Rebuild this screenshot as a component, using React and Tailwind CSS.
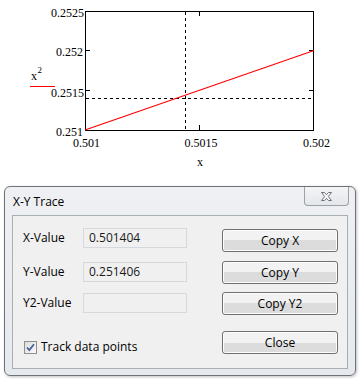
import React from "react";

const Plot = () => {
    const serif = { fontFamily: "'Liberation Serif', serif", fontSize: 12 };
    return (
        <svg width="364" height="182" viewBox="0 0 364 182" className="block">
            <g style={serif} fill="#000">
                <text x="84" y="17" textAnchor="end">0.2525</text>
                <text x="83" y="56" textAnchor="end">0.252</text>
                <text x="84" y="97" textAnchor="end">0.2515</text>
                <text x="83" y="136" textAnchor="end">0.251</text>
                <text x="86.5" y="147" textAnchor="middle">0.501</text>
                <text x="201" y="147" textAnchor="middle">0.5015</text>
                <text x="316.5" y="147" textAnchor="middle">0.502</text>
                <text x="200" y="166" textAnchor="middle">x</text>
                <text x="31" y="80">x</text>
                <text x="37.5" y="73" style={{ fontSize: 9 }}>2</text>
            </g>
            <line x1="30" y1="86.5" x2="55" y2="86.5" stroke="#ff0000" strokeWidth="1" />
            <rect x="85.5" y="11.5" width="228" height="119" fill="none" stroke="#000" strokeWidth="1" />
            {/* ticks */}
            <g stroke="#000" strokeWidth="1" shapeRendering="crispEdges">
                <line x1="199.5" y1="11" x2="199.5" y2="16" />
                <line x1="199.5" y1="125" x2="199.5" y2="130" />
                <line x1="85" y1="50.5" x2="90" y2="50.5" />
                <line x1="85" y1="90.5" x2="90" y2="90.5" />
                <line x1="309" y1="50.5" x2="314" y2="50.5" />
                <line x1="309" y1="90.5" x2="314" y2="90.5" />
            </g>
            {/* trace crosshair */}
            <g stroke="#000" strokeWidth="1" strokeDasharray="3 3" shapeRendering="crispEdges">
                <line x1="185.5" y1="12" x2="185.5" y2="130" />
                <line x1="86" y1="98.5" x2="313" y2="98.5" />
            </g>
            <line x1="85" y1="130" x2="314" y2="50.5" stroke="#ff0000" strokeWidth="1.2" />
        </svg>
    );
};

const Field = ({ value }) => (
    <div className="w-[104px] h-[20px] border border-[#d5d9de] bg-[#f0f0f0] flex items-center pl-[5px] text-[12px] text-[#1a1a1a]">
        {value}
    </div>
);

const WinButton = ({ children, className = "" }) => (
    <button
        className={
            "w-[116px] h-[23px] rounded-[3px] border border-[#707070] bg-gradient-to-b from-[#f2f2f2] from-50% to-[#dcdcdc] to-50% text-[12px] text-black flex items-center justify-center shadow-[inset_0_0_0_1px_#fcfcfc] " +
            className
        }
    >
        {children}
    </button>
);

export default function App() {
    return (
        <div className="w-[364px] h-[379px] bg-white overflow-hidden" style={{ fontFamily: "'Open Sans', 'Noto Sans', sans-serif" }}>
            <Plot />

            {/* X-Y Trace dialog */}
            <div className="ml-[4px] mt-[4px] w-[352px] h-[190px] rounded-[6px] border border-[#6e7378] bg-gradient-to-b from-[#eef0f3] to-[#e6e9ed] shadow-[1px_1px_3px_rgba(0,0,0,0.25)] flex flex-col">
                <div className="h-[28px] flex items-start justify-between">
                    <span className="ml-[8px] mt-[6px] text-[12px] text-black">X-Y Trace</span>
                    <div className="mr-[6px] w-[45px] h-[19px] rounded-b-[4px] border border-t-0 border-[#9ba1a8] bg-gradient-to-b from-[#f4f5f7] to-[#e4e6ea] flex items-center justify-center">
                        <svg width="13" height="11" viewBox="0 0 13 11">
                            <path d="M1.5 1.5h3l2 2.2 2-2.2h3L8.3 5.5l3.2 4h-3L6.5 7.3 4.5 9.5h-3L4.7 5.5z" fill="#fafafa" stroke="#6b7178" strokeWidth="1" strokeLinejoin="round" />
                        </svg>
                    </div>
                </div>
                <div className="mx-[7px] h-[154px] border border-[#a8aeb5] bg-[#f0f0f0] flex justify-between pl-[10px] pr-[9px]">
                    <div className="flex flex-col text-[12px] text-black">
                        <div className="mt-[12px] flex items-center">
                            <span className="w-[60px]">X-Value</span>
                            <Field value="0.501404" />
                        </div>
                        <div className="mt-[14px] flex items-center">
                            <span className="w-[60px]">Y-Value</span>
                            <Field value="0.251406" />
                        </div>
                        <div className="mt-[11px] flex items-center">
                            <span className="w-[60px]">Y2-Value</span>
                            <Field value="" />
                        </div>
                        <label className="mt-[25px] ml-[1px] flex items-center gap-[4px]">
                            <span className="w-[13px] h-[13px] border border-[#8f8f8f] bg-gradient-to-br from-[#dcdcdc] to-[#fbfbfb] flex items-center justify-center">
                                <svg width="9" height="9" viewBox="0 0 9 9">
                                    <path d="M1 4.5l2.3 2.5L8 1.2" fill="none" stroke="#4a5f97" strokeWidth="1.8" />
                                </svg>
                            </span>
                            <span>Track data points</span>
                        </label>
                    </div>
                    <div className="flex flex-col">
                        <WinButton className="mt-[13px]">Copy X</WinButton>
                        <WinButton className="mt-[9px]">Copy Y</WinButton>
                        <WinButton className="mt-[8px]">Copy Y2</WinButton>
                        <WinButton className="mt-[16px]">Close</WinButton>
                    </div>
                </div>
            </div>
        </div>
    );
}
